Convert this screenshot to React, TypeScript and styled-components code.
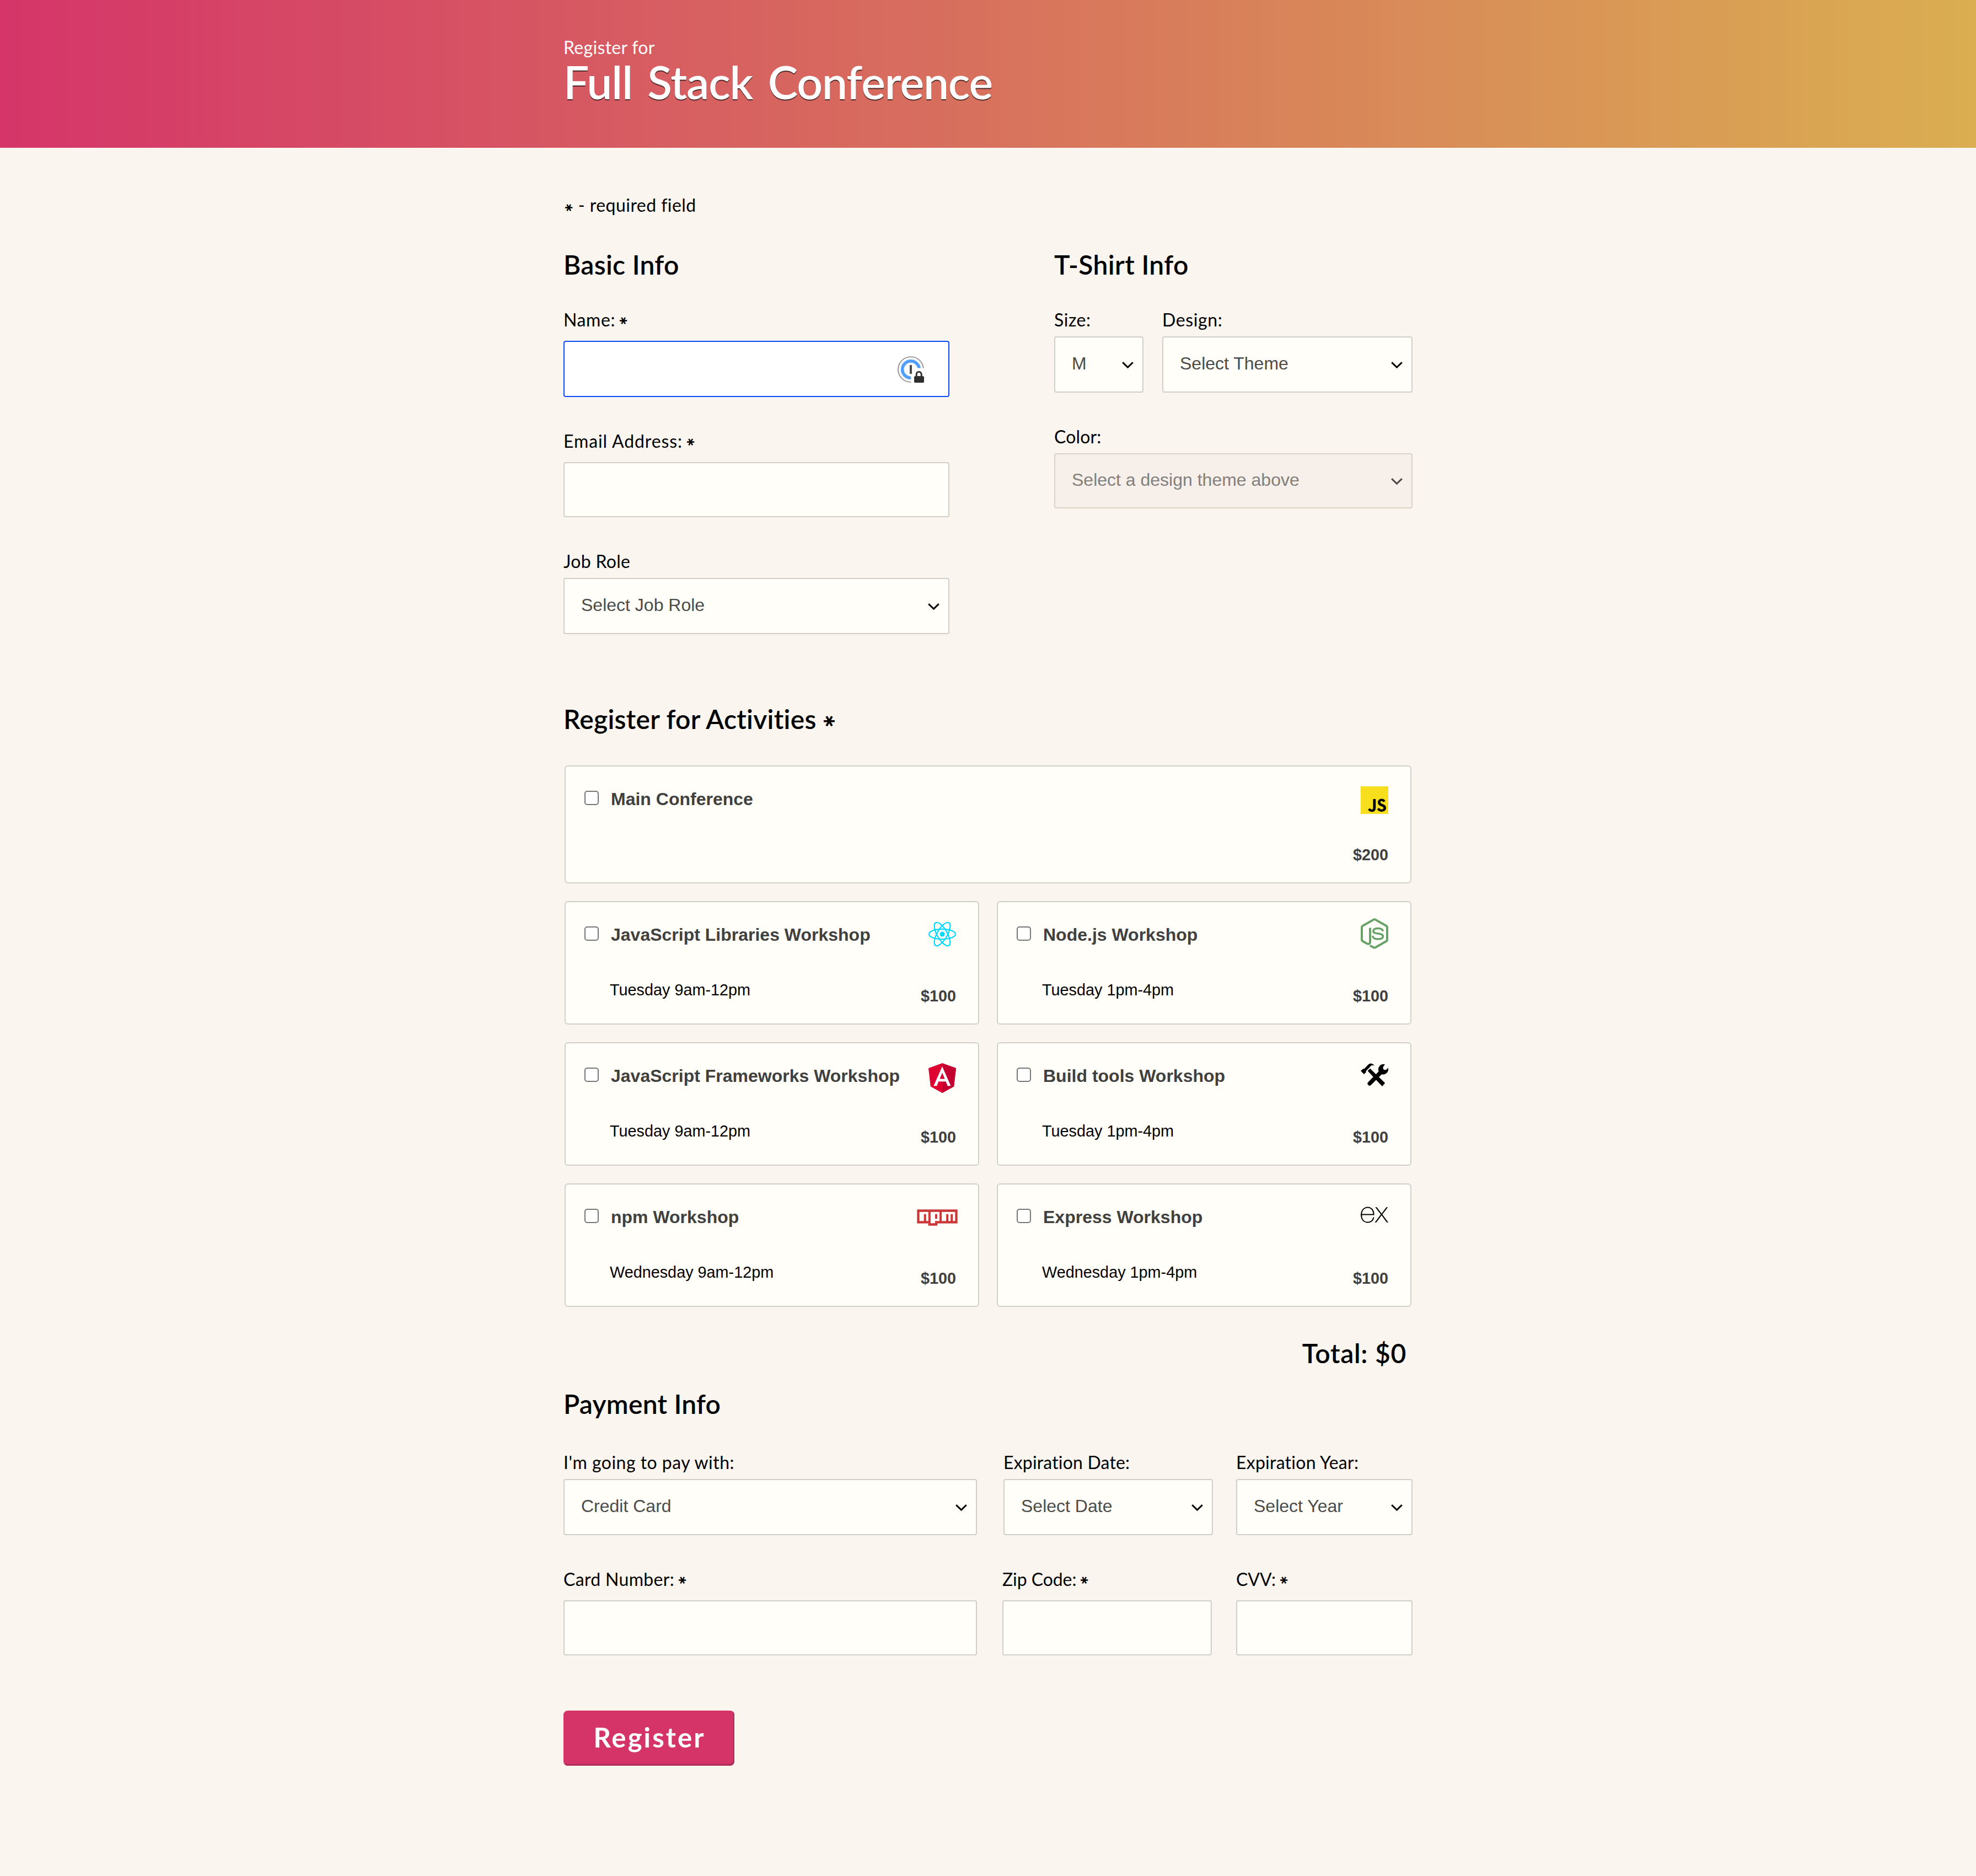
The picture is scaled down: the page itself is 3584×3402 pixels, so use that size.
import React from 'react';
import styled, { createGlobalStyle, css } from 'styled-components';
import { SiExpress, SiJavascript } from 'react-icons/si';

const display = `Lato, 'Open Sans', sans-serif`;
const body = `'Liberation Sans', Arial, sans-serif`;
const ink = '#000';
const paper = '#fffef9';
const line = '#d3cfc7';

const GlobalStyle = createGlobalStyle`
  * { box-sizing: border-box; }
  body {
    margin: 0;
    background: #faf5ee;
    color: ${ink};
    font-family: ${display};
  }
`;

const Page = styled.div`
  min-height: 3402px;
`;

const Header = styled.header`
  height: 268px;
  padding-top: 66px;
  background: linear-gradient(to right, #d53569, #daae51);
`;

const Container = styled.div`
  width: 1540px;
  margin: 0 auto;
`;

const tracked = css<{ $track?: number }>`
  letter-spacing: ${(p) => p.$track ?? 0}px;
`;

const Intro = styled.span`
  display: block;
  font-size: 32px;
  font-weight: 400;
  line-height: 40px;
  color: #fff;
  ${tracked}
`;

const Title = styled.h1`
  margin: 0;
  font-size: 82px;
  font-weight: 600;
  line-height: 84px;
  word-spacing: 8px;
  color: #fff;
  text-shadow: 0 2px 0 rgba(30, 20, 20, 0.75);
  ${tracked}
`;

const Form = styled.form`
  display: flex;
  flex-direction: column;
  padding-top: 84px;
`;

const Required = styled.p`
  display: flex;
  align-items: baseline;
  gap: 6px;
  margin: 0 0 58px;
  padding-left: 1px;
  font-size: 32px;
  font-weight: 400;
  line-height: 40px;
`;

const Tracked = styled.span`
  ${tracked}
`;

const StarMark = styled.span`
  display: inline-block;
  width: 0.94em;
  font-family: 'DejaVu Sans', sans-serif;
  font-size: 0.66em;
  font-weight: 700;
  line-height: 1;
  text-align: center;
  vertical-align: 0.13em;
  transform: rotate(90deg);
`;

const StarGap = styled.span`
  margin-left: 0.18em;
`;

const Heading = styled.h2<{ $below: number }>`
  margin: 0 0 ${(p) => p.$below}px;
  height: 60px;
  font-size: 48px;
  font-weight: 600;
  line-height: 60px;
`;

const InfoColumns = styled.div`
  display: grid;
  grid-template-columns: 700px 650px;
  justify-content: space-between;
  margin-bottom: 124px;
`;

const Fields = styled.div`
  display: flex;
  flex-direction: column;
  gap: 60px;
`;

const FieldRow = styled.div<{ $columns: string; $gap?: number }>`
  display: grid;
  grid-template-columns: ${(p) => p.$columns};
  column-gap: ${(p) => p.$gap ?? 0}px;
`;

const FieldBox = styled.div`
  display: flex;
  flex-direction: column;
`;

const Label = styled.label<{ $gap: number }>`
  height: 40px;
  margin-bottom: ${(p) => p.$gap}px;
  font-size: 32px;
  font-weight: 400;
  line-height: 40px;
  white-space: nowrap;
`;

const InputWrap = styled.div`
  position: relative;
  display: flex;
`;

const Input = styled.input<{ $active?: boolean }>`
  width: 100%;
  height: ${(p) => (p.$active ? 102 : 100)}px;
  padding: 0 32px;
  border: 2px solid ${(p) => (p.$active ? '#0a4bff' : line)};
  border-radius: 4px;
  outline: none;
  background: ${(p) => (p.$active ? '#fff' : paper)};
  font: 32px ${body};
  color: #4b4b49;
`;

const KeyBadge = styled.svg`
  position: absolute;
  top: 28px;
  right: 46px;
  width: 48px;
  height: 48px;
`;

const SelectBox = styled.div<{ $disabled?: boolean }>`
  display: flex;
  align-items: center;
  justify-content: space-between;
  height: ${(p) => (p.$disabled ? 100 : 102)}px;
  padding: 0 16px 0 30px;
  border: 2px solid ${(p) => (p.$disabled ? '#d9d3c9' : line)};
  border-radius: 4px;
  background: ${(p) => (p.$disabled ? '#f7efe9' : paper)};
  color: ${(p) => (p.$disabled ? '#82807b' : '#4b4b49')};
  font: 32px/40px ${body};
`;

const SelectText = styled.span`
  margin-top: -4px;
  white-space: nowrap;
`;

const Chevron = styled.svg<{ $soft?: boolean }>`
  width: 21px;
  height: 12px;
  margin-top: 2px;
  fill: none;
  stroke: ${(p) => (p.$soft ? '#4d4a48' : '#0c0c0c')};
  stroke-width: 3;
`;

const Activities = styled.div`
  display: grid;
  grid-template-columns: 752px 752px;
  grid-template-rows: 214px repeat(3, 224px);
  gap: 32px;
  padding: 0 2px;
`;

const Card = styled.label<{ $wide?: boolean }>`
  display: flex;
  grid-column: ${(p) => (p.$wide ? '1 / -1' : 'auto')};
  padding: 0 40px 0 34px;
  border: 2px solid ${line};
  border-radius: 6px;
  background: ${paper};
  font-family: ${body};
`;

const Checkbox = styled.input`
  appearance: none;
  width: 26px;
  height: 26px;
  margin: 44px 22px 0 0;
  border: 2px solid #767676;
  border-radius: 5px;
  background: #fff;
`;

const CardText = styled.div`
  display: flex;
  flex: 1;
  flex-direction: column;
  padding-top: 39px;
`;

const CardTitle = styled.span`
  font-size: 32px;
  font-weight: 700;
  line-height: 40px;
  color: #40403f;
`;

const CardTime = styled.span`
  margin: 60px 0 0 -2px;
  font-size: 28.8px;
  line-height: 40px;
`;

const CardSide = styled.div`
  display: flex;
  flex-direction: column;
  align-items: flex-end;
  justify-content: space-between;
`;

const IconSlot = styled.span<{ $top: number; $shift?: number }>`
  display: flex;
  margin: ${(p) => p.$top}px ${(p) => p.$shift ?? 0}px 0 0;
`;

const Price = styled.span`
  padding-bottom: 35px;
  font-size: 28.8px;
  font-weight: 700;
  line-height: 1;
  color: #40403f;
`;

const JsTile = styled.span`
  display: flex;
  background: #000;
  color: #f7df1e;
  font-size: 50px;
`;

const ExpressMark = styled.span`
  display: flex;
  align-items: center;
  height: 30px;
  font-size: 50px;
  color: #000;
`;

const Total = styled.div`
  margin: 54px 11px 32px 0;
  font-size: 48px;
  font-weight: 600;
  line-height: 60px;
  text-align: right;
`;

const Submit = styled.button`
  width: 310px;
  height: 100px;
  margin-top: 100px;
  padding: 0 0 4px 2px;
  border: 0;
  border-radius: 8px;
  background: #d53468;
  box-shadow: inset -2px -3px 0 #ad2d58;
  color: #fff;
  font: 700 49px/60px ${display};
  letter-spacing: 3.1px;
`;

function Star() {
  return <StarMark>∗</StarMark>;
}

function Field({
  label,
  track,
  required,
  gap = 10,
  children,
}: {
  label: string;
  track: number;
  required?: boolean;
  gap?: number;
  children: React.ReactNode;
}) {
  return (
    <FieldBox>
      <Label $gap={gap}>
        <Tracked $track={track}>{label}</Tracked>
        {required && (
          <StarGap>
            <Star />
          </StarGap>
        )}
      </Label>
      {children}
    </FieldBox>
  );
}

function Select({ value, disabled }: { value: string; disabled?: boolean }) {
  return (
    <SelectBox $disabled={disabled}>
      <SelectText>{value}</SelectText>
      <Chevron $soft={disabled} viewBox="0 0 21 12">
        <path d="M1.2 1.2 10.5 10.2 19.8 1.2" />
      </Chevron>
    </SelectBox>
  );
}

function PasswordKey() {
  return (
    <KeyBadge viewBox="0 0 48 48">
      <circle cx="24" cy="24" r="23" fill="#f7f7f7" stroke="#8b8b8b" strokeWidth="1.7" />
      <circle cx="24" cy="24" r="15.3" fill="#fafafa" stroke="#509fff" strokeWidth="5.6" />
      <path d="M34.5 21.5H50V50H24.2V33.5L30 30.5Z" fill="#fff" />
      <path d="M24 15.5h5.5v10L26 32h-6V15.5Z" fill="#fafafa" />
      <rect x="22" y="16" width="4" height="16" fill="#4a4a4a" />
      <path d="M34.2 37v-4.3a4.5 4.5 0 0 1 9 0V37" fill="none" stroke="#2f2f2f" strokeWidth="3" />
      <rect x="30" y="36" width="18" height="12.4" rx="2.6" fill="#2f2f2f" />
    </KeyBadge>
  );
}

function ReactLogo() {
  return (
    <svg width="50" height="46" viewBox="-11.5 -10.4 23 20.8">
      <circle r="2.05" fill="#00d8ff" />
      <g fill="none" stroke="#00d8ff" strokeWidth="1">
        <ellipse rx="11" ry="4.2" />
        <ellipse rx="11" ry="4.2" transform="rotate(60)" />
        <ellipse rx="11" ry="4.2" transform="rotate(120)" />
      </g>
    </svg>
  );
}

function NodeLogo() {
  return (
    <svg width="50" height="56" viewBox="0 0 50 56" fill="none" stroke="#66a165" strokeWidth="3.9" strokeLinejoin="round">
      <path d="M17 17.5V42.5Q17 48.5 11 46L3.5 41.8Q2 41 2 39.3V16.3Q2 14.8 3.5 14L23.5 2.6Q25 1.7 26.5 2.6L46.5 14Q48 14.8 48 16.3V39.3Q48 41 46.5 41.8L26.5 53.2Q25 54 23.5 53.2L16.8 49.6" />
      <path d="M40.2 23.8C39.6 19.5 36.5 18.6 31.3 18.6C25.8 18.6 22.8 20.3 22.8 23.4C22.8 26.8 26 27.4 31.5 28C37.8 28.7 40.4 29.8 40.4 33C40.4 36.7 37.3 38 31.6 38C25.2 38 22 36.6 21.6 31.8" strokeWidth="3.5" />
    </svg>
  );
}

function AngularLogo() {
  return (
    <svg width="50" height="54" viewBox="31.9 30 186.2 200" preserveAspectRatio="none">
      <path fill="#dd0031" d="M125 30 31.9 63.2l14.2 123.1L125 230l78.9-43.7 14.2-123.1z" />
      <path fill="#c3002f" d="M125 30v200l78.9-43.7 14.2-123.1z" />
      <path
        fill="#fff"
        d="M125 52.1 66.8 182.6h21.7l11.7-29.2h49.4l11.7 29.2H183zm17 83.3h-34l17-40.9z"
      />
    </svg>
  );
}

function ToolsLogo() {
  return (
    <svg width="50" height="42" viewBox="0 0 50 42" fill="#000">
      <path d="M0 14 4 10.4 6.6 10 14 2.2Q19-2 25 4.2 20 3 17 6.2L15.8 8 9.6 14.2V16.4L6 20Z" />
      <path d="M12.6 14 17 9.8 44.2 36 39 42Z" />
      <path d="M44 2.2A9.6 9.6 0 0 0 32.6 15L13.6 34.2A3.7 3.7 0 0 0 18.8 39.6L38 20.2A9.6 9.6 0 0 0 49.8 8.6L46.4 11.8Q42.6 13.4 41 10.4 39.6 8 41.6 5.6Z" />
    </svg>
  );
}

function NpmLogo() {
  return (
    <svg width="74" height="30" viewBox="-0.15 -0.15 18.3 7.3" preserveAspectRatio="none">
      <path fill="#e9a9aa" d="M-.15-.15h18.3v6.3h-9v1h-4.3v-1H-.15z" />
      <path fill="#cb3837" d="M0 0h18v6H9v1H5V6H0z" />
      <path
        fill="#fff"
        d="M1 5h2V2h1v3h1V1H1zM6 1v5h2V5h2V1zm2 1h1v2H8zM11 1v4h2V2h1v3h1V2h1v3h1V1z"
      />
    </svg>
  );
}

type Activity = {
  name: string;
  time?: string;
  price: string;
  icon: React.ReactNode;
  top: number;
  shift?: number;
};

const activities: Activity[] = [
  { name: 'Main Conference', price: '$200', top: 36, icon: <JsTile><SiJavascript /></JsTile> },
  { name: 'JavaScript Libraries Workshop', time: 'Tuesday 9am-12pm', price: '$100', top: 35, icon: <ReactLogo /> },
  { name: 'Node.js Workshop', time: 'Tuesday 1pm-4pm', price: '$100', top: 29, icon: <NodeLogo /> },
  { name: 'JavaScript Frameworks Workshop', time: 'Tuesday 9am-12pm', price: '$100', top: 36, icon: <AngularLogo /> },
  { name: 'Build tools Workshop', time: 'Tuesday 1pm-4pm', price: '$100', top: 36, icon: <ToolsLogo /> },
  { name: 'npm Workshop', time: 'Wednesday 9am-12pm', price: '$100', top: 45, shift: -3, icon: <NpmLogo /> },
  { name: 'Express Workshop', time: 'Wednesday 1pm-4pm', price: '$100', top: 40, icon: <ExpressMark><SiExpress /></ExpressMark> },
];

export default function App() {
  return (
    <Page>
      <GlobalStyle />
      <Header>
        <Container>
          <Intro $track={0.31}>Register for</Intro>
          <Title $track={-1.05}>Full Stack Conference</Title>
        </Container>
      </Header>
      <Container>
        <Form>
          <Required>
            <Star />
            <Tracked $track={0.45}>- required field</Tracked>
          </Required>

          <InfoColumns>
            <section>
              <Heading $below={50}>
                <Tracked $track={0.3}>Basic Info</Tracked>
              </Heading>
              <Fields>
                <Field label="Name:" track={0.6} required gap={18}>
                  <InputWrap>
                    <Input $active />
                    <PasswordKey />
                  </InputWrap>
                </Field>
                <Field label="Email Address:" track={0.9} required gap={18}>
                  <Input />
                </Field>
                <Field label="Job Role" track={0.3}>
                  <Select value="Select Job Role" />
                </Field>
              </Fields>
            </section>
            <section>
              <Heading $below={50}>
                <Tracked $track={0.39}>T-Shirt Info</Tracked>
              </Heading>
              <Fields>
                <FieldRow $columns="162px 454px" $gap={34}>
                  <Field label="Size:" track={0.5}>
                    <Select value="M" />
                  </Field>
                  <Field label="Design:" track={0.6}>
                    <Select value="Select Theme" />
                  </Field>
                </FieldRow>
                <Field label="Color:" track={0.15}>
                  <Select value="Select a design theme above" disabled />
                </Field>
              </Fields>
            </section>
          </InfoColumns>

          <Heading $below={54}>
            <Tracked $track={0.28}>Register for Activities</Tracked>
            <StarGap>
              <Star />
            </StarGap>
          </Heading>
          <Activities>
            {activities.map((a, i) => (
              <Card key={a.name} $wide={i === 0}>
                <Checkbox type="checkbox" />
                <CardText>
                  <CardTitle>{a.name}</CardTitle>
                  {a.time && <CardTime>{a.time}</CardTime>}
                </CardText>
                <CardSide>
                  <IconSlot $top={a.top} $shift={a.shift}>
                    {a.icon}
                  </IconSlot>
                  <Price>{a.price}</Price>
                </CardSide>
              </Card>
            ))}
          </Activities>
          <Total>
            <Tracked $track={0.71}>Total: $0</Tracked>
          </Total>

          <Heading $below={56}>
            <Tracked $track={0.25}>Payment Info</Tracked>
          </Heading>
          <Fields>
            <FieldRow $columns="798px 422px 320px">
              <FieldRow $columns="750px">
                <Field label="I'm going to pay with:" track={0.48}>
                  <Select value="Credit Card" />
                </Field>
              </FieldRow>
              <FieldRow $columns="380px">
                <Field label="Expiration Date:" track={0.18}>
                  <Select value="Select Date" />
                </Field>
              </FieldRow>
              <Field label="Expiration Year:" track={0.25}>
                <Select value="Select Year" />
              </Field>
            </FieldRow>
            <FieldRow $columns="796px 424px 320px">
              <FieldRow $columns="750px">
                <Field label="Card Number:" track={0.33} required gap={18}>
                  <Input />
                </Field>
              </FieldRow>
              <FieldRow $columns="380px">
                <Field label="Zip Code:" track={-0.08} required gap={18}>
                  <Input />
                </Field>
              </FieldRow>
              <Field label="CVV:" track={-0.08} required gap={18}>
                <Input />
              </Field>
            </FieldRow>
          </Fields>
          <Submit type="button">Register</Submit>
        </Form>
      </Container>
    </Page>
  );
}
